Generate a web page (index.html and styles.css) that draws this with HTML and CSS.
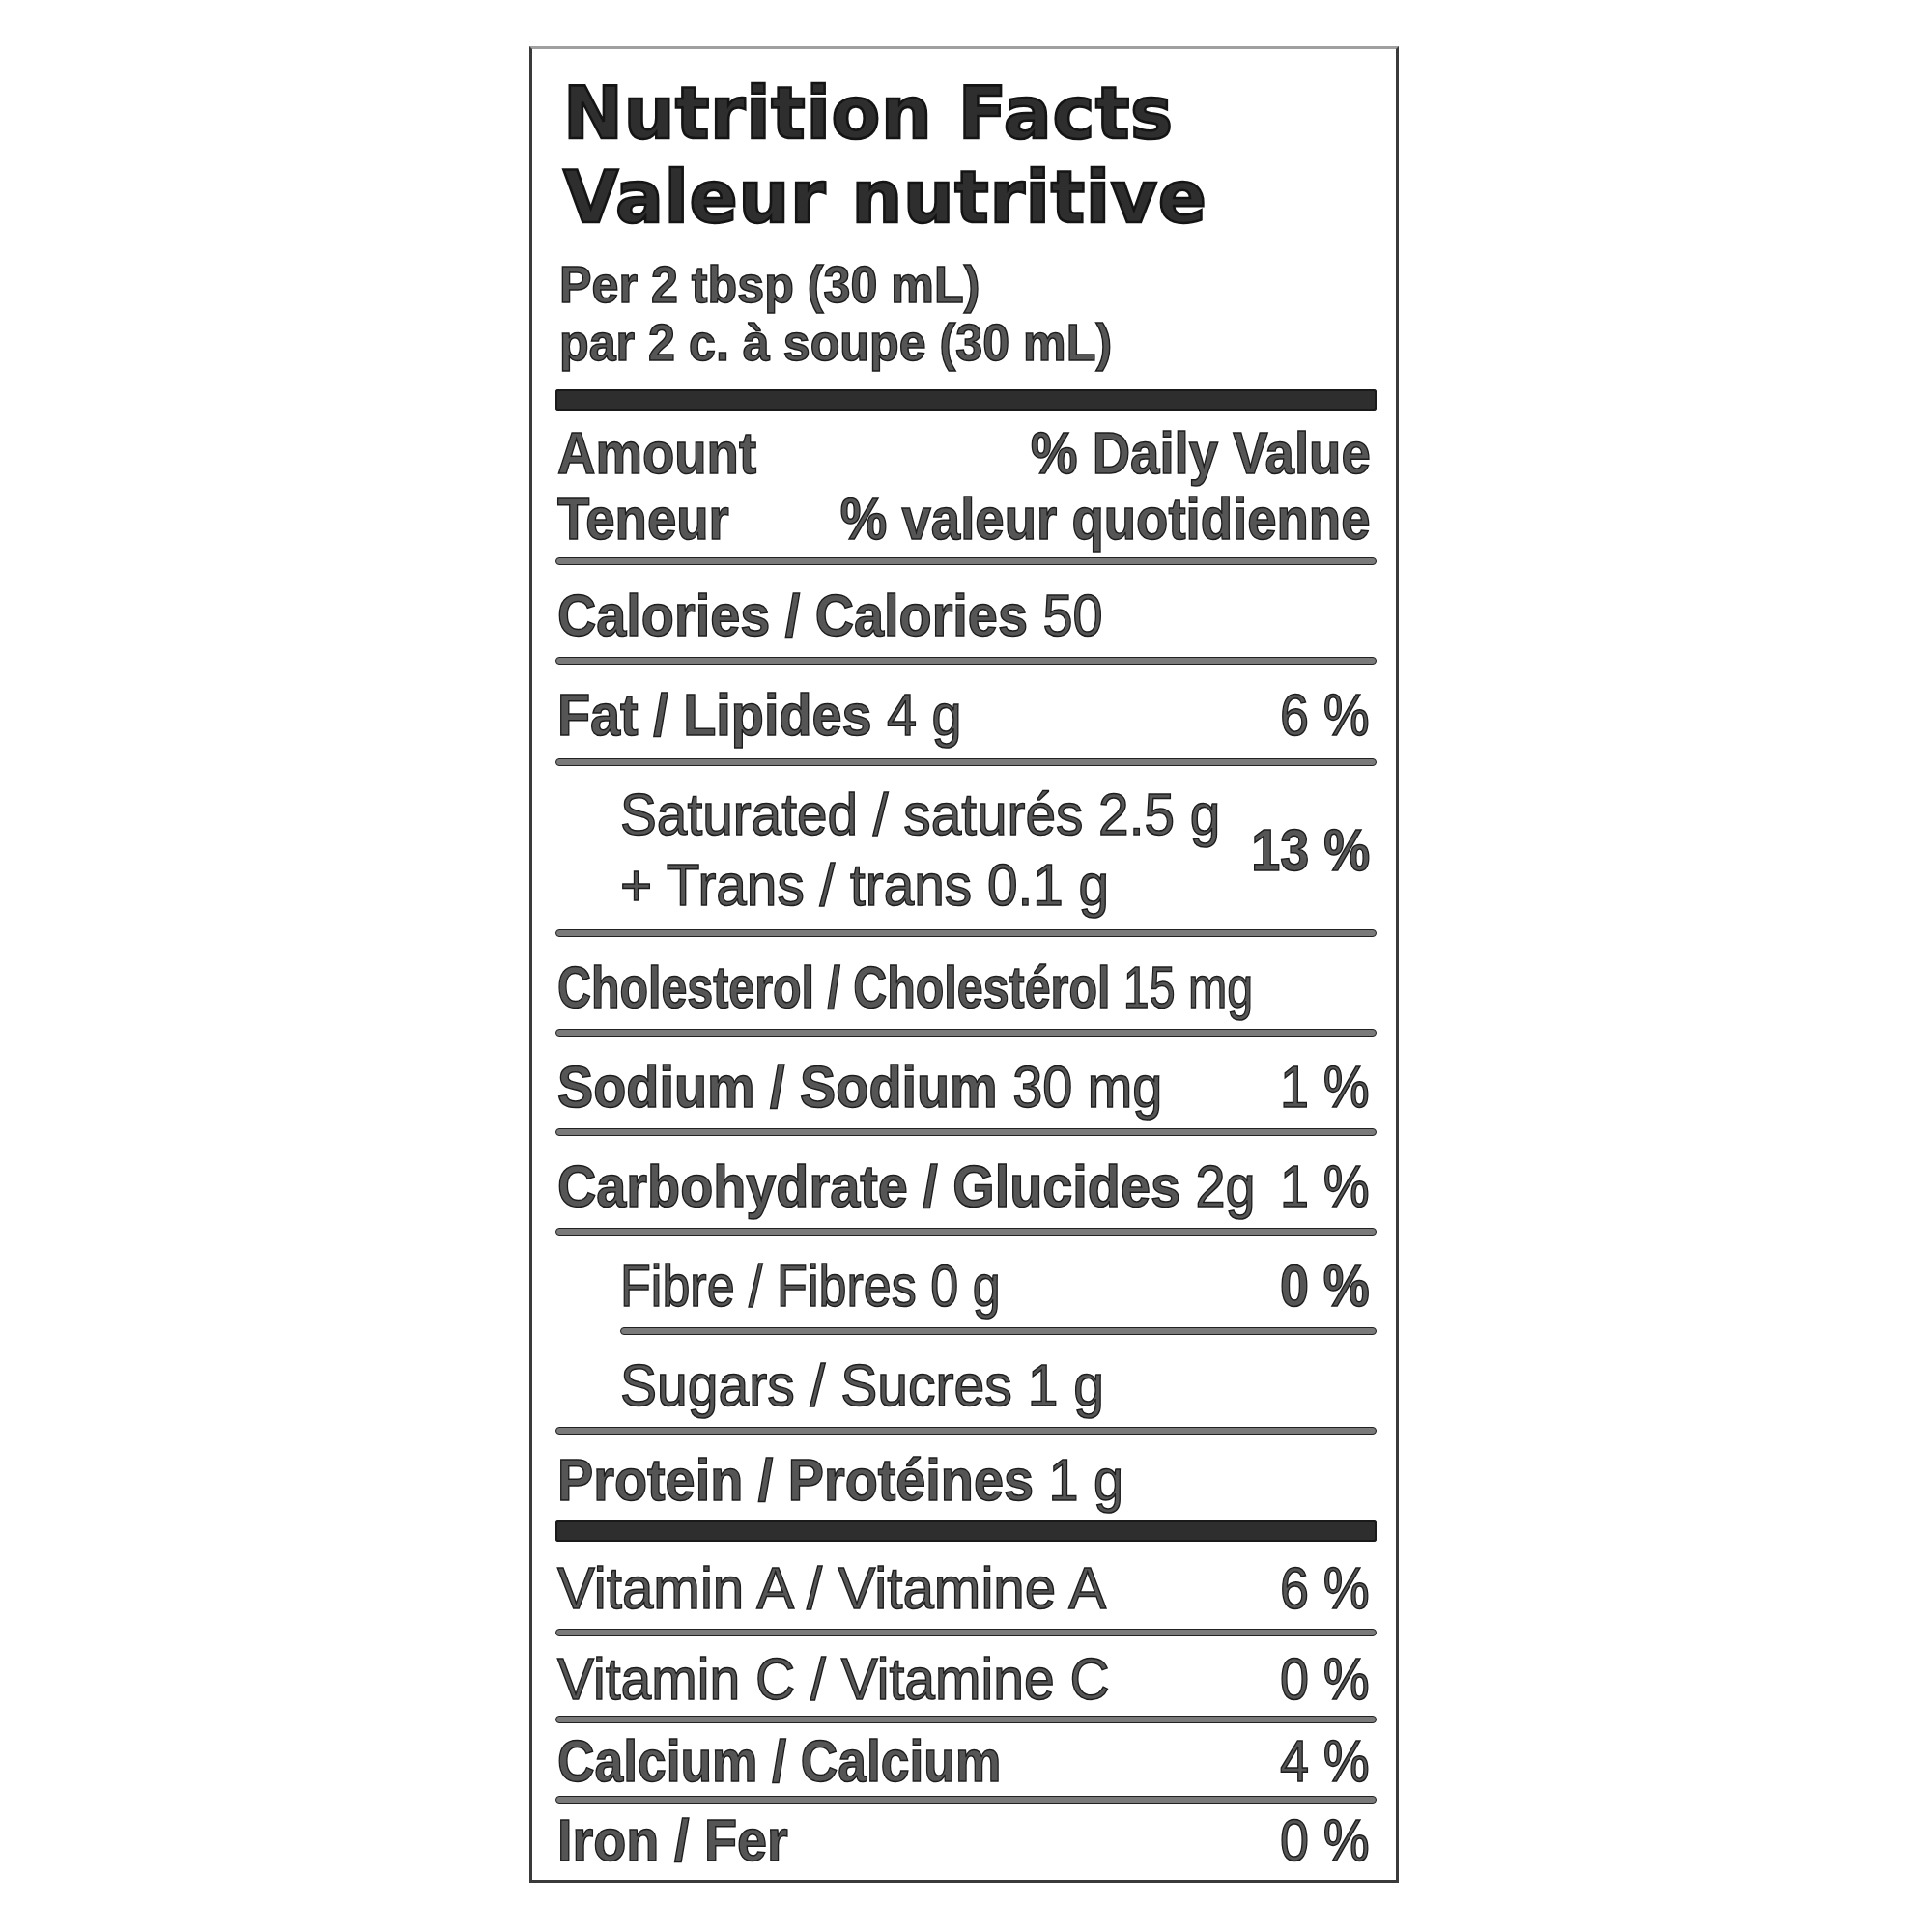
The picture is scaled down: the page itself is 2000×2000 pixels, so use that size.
FILE: index.html
```html
<!DOCTYPE html>
<html lang="en">
<head>
<meta charset="utf-8">
<title>Nutrition Facts</title>
<link rel="stylesheet" href="styles.css">
</head>
<body>
<div class="label">
  <div class="title">Nutrition Facts</div>
  <div class="title">Valeur nutritive</div>
  <div class="serving first"><span class="t">Per 2 tbsp (30 mL)</span></div>
  <div class="serving"><span class="t">par 2 c. à soupe (30 mL)</span></div>
  <div class="bar top"></div>
  <div class="head first"><span class="t b">Amount</span><span class="t b r">% Daily Value</span></div>
  <div class="head"><span class="t b">Teneur</span><span class="t b r">% valeur quotidienne</span></div>
  <div class="rule"></div>
  <div class="row"><span class="t"><span class="b">Calories / Calories</span> 50</span></div>
  <div class="rule"></div>
  <div class="row fat"><span class="t"><span class="b">Fat / Lipides</span> 4 g</span><span class="t r pct">6 %</span></div>
  <div class="rule"></div>
  <div class="row double">
    <div class="sub">
      <div><span class="t">Saturated / saturés 2.5 g</span></div>
      <div><span class="t">+ Trans / trans 0.1 g</span></div>
    </div>
    <span class="t r pct b">13 %</span>
  </div>
  <div class="rule"></div>
  <div class="row"><span class="t chol"><span class="b">Cholesterol / Cholestérol</span> 15 mg</span></div>
  <div class="rule"></div>
  <div class="row"><span class="t"><span class="b">Sodium / Sodium</span> 30 mg</span><span class="t r pct">1 %</span></div>
  <div class="rule"></div>
  <div class="row"><span class="t"><span class="b">Carbohydrate / Glucides</span> 2g</span><span class="t r pct">1 %</span></div>
  <div class="rule"></div>
  <div class="row indent"><span class="t fibre">Fibre / Fibres 0 g</span><span class="t r pct b">0 %</span></div>
  <div class="rule short"></div>
  <div class="row indent"><span class="t">Sugars / Sucres 1 g</span></div>
  <div class="rule"></div>
  <div class="row protein"><span class="t"><span class="b">Protein / Protéines</span> 1 g</span></div>
  <div class="bar"></div>
  <div class="row vit-a"><span class="t">Vitamin A / Vitamine A</span><span class="t r pct">6 %</span></div>
  <div class="rule"></div>
  <div class="row vit-c"><span class="t">Vitamin C / Vitamine C</span><span class="t r pct">0 %</span></div>
  <div class="rule"></div>
  <div class="row vit-ca"><span class="t b mineral">Calcium / Calcium</span><span class="t r pct">4 %</span></div>
  <div class="rule"></div>
  <div class="row vit-fe"><span class="t b iron">Iron / Fer</span><span class="t r pct">0 %</span></div>
</div>
</body>
</html>
```

FILE: styles.css
```css
html, body {
  margin: 0;
  padding: 0;
  background: #ffffff;
}

.label {
  box-sizing: border-box;
  width: 900px;
  height: 1901px;
  margin: 48px 0 0 548px;
  border: 3px solid #3a3a3a;
  border-top-color: #a0a0a0;
  padding: 0 20px 0 24px;
  font-family: "Liberation Sans", Arial, sans-serif;
  color: #555555;
  -webkit-text-stroke: 1.5px #1c1c1c;
}

/* condensed type: glyphs narrowed horizontally */
.t {
  display: inline-block;
  white-space: nowrap;
  transform: scaleX(var(--sx, 0.9));
  transform-origin: left center;
}

.t.r {
  transform-origin: right center;
}

.b {
  font-weight: 700;
}

.title {
  font-family: "DejaVu Sans", "Liberation Sans", sans-serif;
  font-weight: 700;
  font-size: 74px;
  line-height: 87px;
  padding-left: 8px;
  letter-spacing: 0.7px;
  color: #2e2e2e;
  -webkit-text-stroke: 2.6px #141414;
  white-space: nowrap;
}

.title:first-child {
  margin-top: 23px;
}

.serving {
  font-weight: 700;
  font-size: 54px;
  line-height: 60px;
  padding-left: 4px;
  white-space: nowrap;
  --sx: 0.93;
}

.serving.first {
  margin-top: 16px;
}

.bar {
  height: 22px;
  background: #2e2e2e;
  border-radius: 3px;
  box-shadow: inset 0 0 0 2px #1a1a1a;
}

.bar.top {
  margin-top: 19px;
}

.head {
  display: flex;
  justify-content: space-between;
  font-size: 62px;
  line-height: 68px;
  padding: 0 6px 0 2px;
  --sx: 0.88;
}

.head.first {
  margin-top: 10px;
}

.head + .rule {
  margin-top: 6px;
}

.rule {
  height: 6px;
  background: #7a7a7a;
  border: 1px solid #222222;
  border-radius: 4px;
}

.rule.short {
  margin-left: 67px;
}

.row {
  display: flex;
  align-items: center;
  font-size: 62px;
  line-height: 68px;
  padding: 18px 7px 9px 2px;
}

.row > .t,
.row > .sub {
  flex: 0 1 auto;
  min-width: 0;
}

.row > .pct {
  flex: 0 0 auto;
  margin-left: auto;
  --sx: 0.87;
}

.row.fat {
  padding-bottom: 11px;
}

.row.double {
  padding: 13px 7px 10px 67px;
  line-height: 73px;
}

.sub {
  --sx: 0.915;
}

.row.indent {
  padding-left: 67px;
  --sx: 0.92;
}

.t.chol {
  --sx: 0.78;
}

.t.fibre {
  --sx: 0.84;
}

.row.protein {
  padding-top: 13px;
  padding-bottom: 8px;
}

.row.vit-a {
  padding-top: 14px;
  padding-bottom: 8px;
  --sx: 0.94;
}

.row.vit-c {
  padding-top: 10px;
  padding-bottom: 4px;
  --sx: 0.92;
}

.row.vit-ca {
  padding-top: 5px;
  padding-bottom: 2px;
}

.row.vit-fe {
  padding-top: 4px;
  padding-bottom: 0;
}

.t.mineral {
  --sx: 0.86;
}

.t.iron {
  --sx: 0.9;
}
```
